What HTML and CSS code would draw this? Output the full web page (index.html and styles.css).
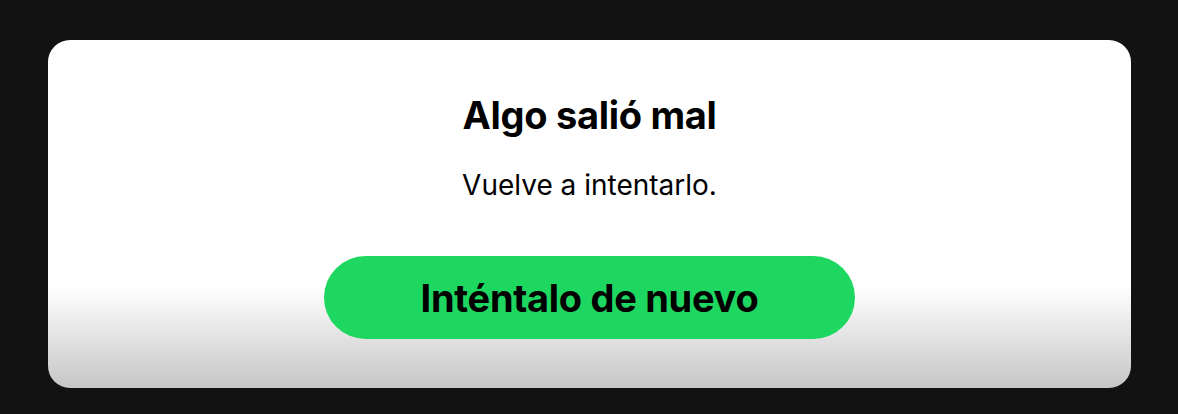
FILE: index.html
```html
<!DOCTYPE html>
<html lang="es">
<head>
    <meta charset="UTF-8">
    <meta name="viewport" content="width=device-width, initial-scale=1.0">
    <title>Algo salió mal</title>
    <link rel="stylesheet" href="styles.css">
</head>
<body>
    <div class="dialog">
        <h2>Algo salió mal</h2>
        <p class="message">Vuelve a intentarlo.</p>
        <button type="button" class="retry">Inténtalo de nuevo</button>
    </div>
</body>
</html>
```
FILE: styles.css
```css
* {
    margin: 0;
    padding: 0;
    box-sizing: border-box;
}
body {
    font-family: 'Inter', 'Liberation Sans', sans-serif;
    background: #121212;
    height: 100vh;
    padding: 40px 47px 26px 48px;
}
.dialog {
    height: 100%;
    background: linear-gradient(180deg, #ffffff 0%, #ffffff 71%, #c6c6c6 100%);
    border-radius: 22px;
    display: flex;
    flex-direction: column;
    align-items: center;
    padding-top: 48px;
    color: #000;
}
h2 {
    font-size: 38px;
    font-weight: 700;
    line-height: 54px;
    letter-spacing: -0.3px;
}
.message {
    font-size: 28px;
    line-height: 40px;
    margin-top: 23px;
}
.retry {
    margin-top: 51px;
    width: 531px;
    height: 83px;
    border: none;
    border-radius: 42px;
    background: #1ed760;
    color: #000;
    font-family: inherit;
    font-size: 38px;
    font-weight: 700;
    letter-spacing: -0.3px;
    cursor: pointer;
}
```
